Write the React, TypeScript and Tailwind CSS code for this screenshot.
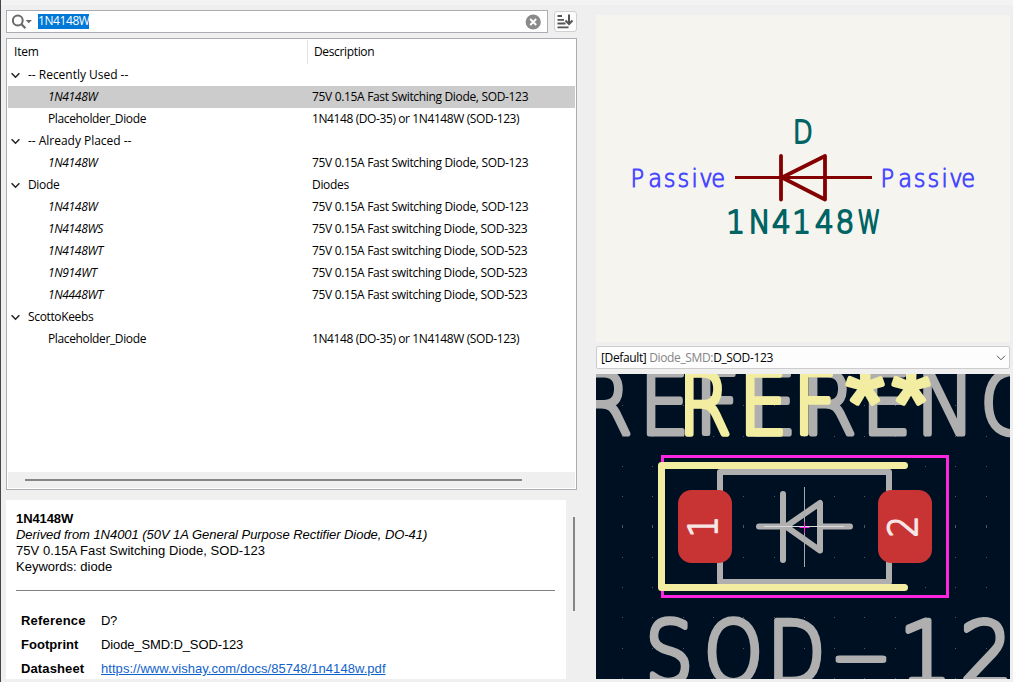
import React from "react";

type Row = { item: string; desc?: string; kind: "group" | "part" | "alias"; selected?: boolean };

const rows: Row[] = [
  { item: "-- Recently Used --", kind: "group" },
  { item: "1N4148W", desc: "75V 0.15A Fast Switching Diode, SOD-123", kind: "alias", selected: true },
  { item: "Placeholder_Diode", desc: "1N4148 (DO-35) or 1N4148W (SOD-123)", kind: "part" },
  { item: "-- Already Placed --", kind: "group" },
  { item: "1N4148W", desc: "75V 0.15A Fast Switching Diode, SOD-123", kind: "alias" },
  { item: "Diode", desc: "Diodes", kind: "group" },
  { item: "1N4148W", desc: "75V 0.15A Fast Switching Diode, SOD-123", kind: "alias" },
  { item: "1N4148WS", desc: "75V 0.15A Fast switching Diode, SOD-323", kind: "alias" },
  { item: "1N4148WT", desc: "75V 0.15A Fast switching Diode, SOD-523", kind: "alias" },
  { item: "1N914WT", desc: "75V 0.15A Fast switching Diode, SOD-523", kind: "alias" },
  { item: "1N4448WT", desc: "75V 0.15A Fast switching Diode, SOD-523", kind: "alias" },
  { item: "ScottoKeebs", kind: "group" },
  { item: "Placeholder_Diode", desc: "1N4148 (DO-35) or 1N4148W (SOD-123)", kind: "part" },
];

/* Plotter-style lettering: one x position per character. */
function Plot({ text, xs, y, size, sx = 1, stroke, color, arial }: { text: string; xs: number[]; y: number; size: number; sx?: number; stroke: number; color: string; arial?: boolean }) {
  return (
    <text
      transform={`scale(${sx} 1)`}
      x={xs.map((v) => v / sx).join(" ")}
      y={y}
      fontSize={size}
      fill={color}
      stroke={color}
      strokeWidth={stroke}
      strokeLinejoin="round"
      className={arial ? "font-['Liberation_Sans',sans-serif]" : "font-['DejaVu_Sans',sans-serif] font-extralight"}
    >
      {text}
    </text>
  );
}

function SearchBar() {
  return (
    <div className="flex items-center gap-[6px]">
      <div className="flex h-[23px] w-[542px] items-center border border-[#abadb3] bg-white pl-[5px] pr-[6px]">
        <svg width="21" height="16" viewBox="0 0 21 16" fill="none" stroke="#6a6a6a">
          <circle cx="5.8" cy="6.5" r="4.9" strokeWidth="2" />
          <path d="M9.3 10 L13.4 14.2" strokeWidth="2.2" />
          <path d="M13.6 6 H20 L16.8 9.2Z" fill="#6a6a6a" stroke="none" />
        </svg>
        <span className="-mt-px ml-[5px] h-[15px] w-[51px] whitespace-nowrap bg-[#0078d7] text-[12px] leading-[14px] tracking-[-0.42px] text-white">1N4148W</span>
        <svg className="ml-auto" width="16" height="16" viewBox="0 0 16 16">
          <circle cx="8.2" cy="8" r="7.6" fill="#8a8a8a" />
          <path d="M5.2 5 L11.2 11 M11.2 5 L5.2 11" stroke="#fff" strokeWidth="1.9" />
        </svg>
      </div>
      <div className="flex h-[21px] w-[23px] items-center justify-center rounded-[3px] border border-[#d0d0d0] bg-[#fdfdfd]">
        <svg width="17" height="16" viewBox="0 0 17 16" fill="none" stroke="#545454">
          <path d="M0.5 2H5 M0.5 5.8H7 M0.5 9.5H8.5 M0.5 13.3H11.5" strokeWidth="1.8" />
          <path d="M12 0.5V10 M8.5 6.5 L12 10.1 L15.5 6.5" strokeWidth="2" />
        </svg>
      </div>
    </div>
  );
}

function Tree() {
  return (
    <div className="mt-[5px] flex h-[452px] w-[571px] flex-col border border-[#abadb3] bg-white p-px text-[12px]">
      <div className="flex h-[24px] items-center">
        <div className="flex h-[24px] w-[300px] items-center border-r border-[#e5e5e5] pl-[6px] tracking-[-0.2px]">Item</div>
        <div className="pl-[6px] tracking-[-0.35px]">Description</div>
      </div>
      {rows.map((r, i) => (
        <div key={i} className={`flex h-[22px] shrink-0 items-center ${r.selected ? "bg-[#cccccc]" : ""}`}>
          <div
            className={`flex w-[304px] items-center ${
              r.kind === "group" ? "pl-[3px]" : r.kind === "alias" ? "pl-[40px] italic tracking-[-0.35px]" : "pl-[40px] tracking-[-0.37px]"
            } ${r.item.startsWith("--") ? "tracking-[-0.02px]" : r.kind === "group" ? "tracking-[-0.35px]" : ""}`}
          >
            {r.kind === "group" && (
              <svg className="mr-[8px]" width="9" height="7" viewBox="0 0 9 7" fill="none" stroke="#222" strokeWidth="1.5">
                <path d="M0.6 1.2 L4.5 5.2 L8.4 1.2" />
              </svg>
            )}
            {r.item}
          </div>
          <div className={`whitespace-nowrap ${r.kind === "part" ? "tracking-[-0.4px]" : "tracking-[-0.33px]"}`}>{r.desc}</div>
        </div>
      ))}
      <div className="mt-auto flex h-[16px] items-center bg-[#efefef] pl-[17px]">
        <div className="h-[2px] w-[497px] bg-[#868686]" />
      </div>
    </div>
  );
}

function Details() {
  return (
    <div className="mt-[10px] flex">
      <div className="h-[179px] w-[560px] overflow-hidden bg-white px-[10px] pt-[11px] font-['Liberation_Sans',Arial,sans-serif] text-[13px] leading-[16px]">
        <div className="font-bold tracking-[-0.1px]">1N4148W</div>
        <div className="italic tracking-[-0.045px]">Derived from 1N4001 (50V 1A General Purpose Rectifier Diode, DO-41)</div>
        <div className="tracking-[0.05px]">75V 0.15A Fast Switching Diode, SOD-123</div>
        <div>Keywords: diode</div>
        <div className="mt-[15px] h-px w-[539px] bg-[#808080]" />
        <div className="mt-[18px] grid grid-cols-[80px_1fr] pl-[5px] leading-[24px]">
          <b className="tracking-[0.2px]">Reference</b><span className="tracking-[-0.3px]">D?</span>
          <b className="tracking-[0.05px]">Footprint</b><span className="tracking-[-0.12px]">Diode_SMD:D_SOD-123</span>
          <b className="tracking-[0.12px]">Datasheet</b><a className="tracking-[0.05px] text-[#0f62cc] underline">https://www.vishay.com/docs/85748/1n4148w.pdf</a>
        </div>
      </div>
      <div className="ml-[7px] mt-[17px] h-[94px] w-[2px] bg-[#868686]" />
    </div>
  );
}

function SymbolPreview() {
  return (
    <svg className="block bg-[#f5f4ef]" width="414" height="327" viewBox="596 15 414 327">
      <g fill="none" stroke="#840000" strokeWidth="3.8" strokeLinecap="round" strokeLinejoin="round">
        <path d="M735 177.5H872" strokeLinecap="butt" strokeWidth="3" />
        <path d="M781 156V199.5 M825 156V199.5L782 177.5Z" />
      </g>
      <Plot text="D" xs={[793]} y={143.5} size={32} sx={0.8} stroke={2} color="#006464" />
      <Plot text="1N4148" xs={[726.3, 748.6, 772, 792.3, 815, 835.4]} y={232.9} size={31.5} sx={0.94} stroke={1.9} color="#006464" />
      <Plot text="W" xs={[857.5]} y={232.9} size={31.5} sx={0.74} stroke={1.9} color="#006464" />
      <Plot text="Passive" xs={[630.5, 648.3, 663.8, 677.5, 691.5, 699.3, 711.2]} y={187} size={24.5} sx={0.92} stroke={1} color="#4848ff" />
      <Plot text="Passive" xs={[880.5, 898.3, 913.8, 927.5, 941.5, 949.3, 961.2]} y={187} size={24.5} sx={0.92} stroke={1} color="#4848ff" />
    </svg>
  );
}

const gridX = [622.5, 652.5, 683.5, 713.5, 743.5, 774.5, 804.5, 834.5, 864.5, 895.5, 925.5, 955.5, 986.5];
const gridY = [405, 436, 466, 496, 526, 557, 587, 617, 648, 678];

function FootprintPreview() {
  return (
    <svg className="block bg-[#001023]" width="414" height="305" viewBox="596 374 414 305">
      {gridX.map((x) => gridY.map((y) => <rect key={`${x}-${y}`} x={x - 0.5} y={y === 526 ? 525 : y} width="1" height={y === 526 ? 3 : 1} fill="#4d5865" />))}
      <Plot text="REFERENC" xs={[577.5, 639.5, 694.5, 746.5, 801.5, 861.5, 916, 980]} y={434} size={86} sx={0.92} stroke={5} color="#afafaf" />
      <Plot text="SOD" xs={[645.5, 704, 767.5]} y={683} size={86} sx={0.87} stroke={5.6} color="#afafaf" />
      <Plot text="-" xs={[831.5]} y={683} size={86} sx={1.9} stroke={4} color="#afafaf" />
      <Plot text="12" xs={[899, 960]} y={683} size={86} sx={0.97} stroke={5.4} color="#afafaf" />
      <g fill="none" stroke="#afafaf" strokeWidth="6" strokeLinecap="round" strokeLinejoin="round">
        <rect x="720" y="472" width="169" height="110" />
        <path d="M759 526.5H783 M783 494V560 M786 526.5L820 503V550.5Z M820 526.5H850" />
      </g>
      <rect x="662.5" y="456.5" width="285" height="140" fill="none" stroke="#ff26e2" strokeWidth="3" />
      <path d="M904.5 465.5H661.5V587.5H904.5" fill="none" stroke="#f2eda1" strokeWidth="7" strokeLinecap="round" strokeLinejoin="round" />
      <Plot text="REF" xs={[678, 739, 793]} y={434} size={86} sx={0.89} stroke={5.4} color="#f2eda1" />
      <Plot text="**" xs={[846, 892]} y={437} size={98} stroke={4.5} color="#f2eda1" arial />
      <rect x="678" y="490" width="54" height="73" rx="13.5" fill="#c83434" />
      <rect x="878" y="490" width="54" height="73" rx="13.5" fill="#c83434" />
      <g transform="translate(717 537.5) rotate(-90)">
        <Plot text="1" xs={[0]} y={0} size={39} sx={0.88} stroke={1.8} color="#f7e4e4" />
      </g>
      <g transform="translate(917 537.5) rotate(-90)">
        <Plot text="2" xs={[0]} y={0} size={39} sx={0.88} stroke={1.8} color="#f7e4e4" />
      </g>
      <path d="M764 526.5H844" stroke="#d8dadc" strokeWidth="1" />
      <path d="M804.5 487V567" stroke="#a4a9ae" strokeWidth="1" />
      <path d="M799.5 527.5H809.5 M804.5 522V533" stroke="#ff26e2" strokeWidth="1" />
    </svg>
  );
}

export default function App() {
  return (
    <div className="flex h-[682px] w-[1013px] overflow-hidden bg-[#efefef] bg-linear-to-b from-[#f3f3f3] from-[5px] to-[#efefef] to-[5px] font-['Open_Sans','Noto_Sans',sans-serif] text-black">
      <div className="w-px bg-[#45454b]" />
      <div className="w-[595px] pl-[5px] pt-[10px]">
        <SearchBar />
        <Tree />
        <Details />
      </div>
      <div className="flex w-[414px] flex-col pt-[15px]">
        <SymbolPreview />
        <div className="mb-[5px] mt-[4px] flex h-[23px] items-center rounded-[2px] border border-[#cccccc] bg-[#fdfdfd] pl-[4px] pr-[3px] text-[12px] tracking-[-0.36px]">
          <span className="whitespace-pre">[Default] <span className="text-[#858585]">Diode_SMD:</span>D_SOD-123</span>
          <svg className="ml-auto" width="10" height="6" viewBox="0 0 10 6" fill="none" stroke="#555">
            <path d="M1 0.8 L5 4.8 L9 0.8" />
          </svg>
        </div>
        <FootprintPreview />
      </div>
    </div>
  );
}
